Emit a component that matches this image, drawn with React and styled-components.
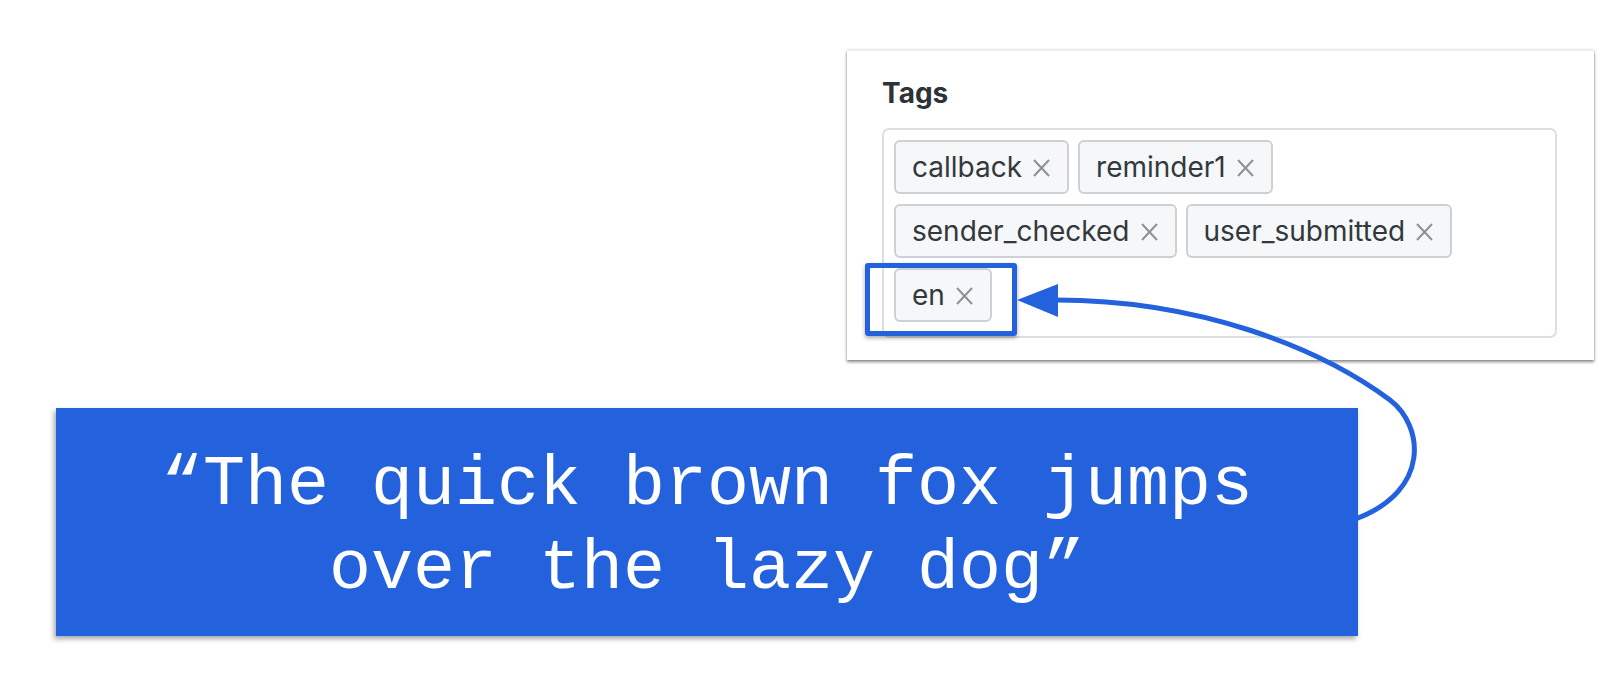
import React from 'react';
import styled, { createGlobalStyle } from 'styled-components';

const BLUE = '#2461dc';

const GlobalStyle = createGlobalStyle`
    html, body {
        margin: 0;
        padding: 0;
        background: #ffffff;
    }
    body {
        width: 1618px;
        height: 692px;
        overflow: hidden;
    }
`;

const Stage = styled.div`
    position: relative;
    width: 1618px;
    height: 692px;
    padding-top: 50px;
    box-sizing: border-box;
`;

const Card = styled.div`
    margin-left: 847px;
    width: 747px;
    height: 310px;
    box-sizing: border-box;
    padding: 26px 37px 0 35px;
    background: #ffffff;
    border-top: 1px solid #efefef;
    box-shadow: 0 2px 3px rgba(0, 0, 0, 0.45), 0 0 2px rgba(0, 0, 0, 0.18);
`;

const Label = styled.div`
    font-family: 'Inter', 'Liberation Sans', sans-serif;
    font-weight: 700;
    font-size: 28px;
    line-height: 32px;
    color: #2d3237;
`;

const TagBox = styled.div`
    margin-top: 19px;
    width: 675px;
    height: 210px;
    box-sizing: border-box;
    padding: 10px;
    border: 2px solid #dcdfe2;
    border-radius: 7px;
    display: flex;
    flex-wrap: wrap;
    align-content: flex-start;
    gap: 10px 9px;
`;

const Chip = styled.div`
    height: 54px;
    box-sizing: border-box;
    display: inline-flex;
    align-items: center;
    gap: 10px;
    padding: 0 16px;
    border: 2px solid #cdd1d5;
    border-radius: 6px;
    background: #f6f7f8;
    font-family: 'Inter', 'Liberation Sans', sans-serif;
    font-size: 28px;
    color: #33383d;
`;

const Remove = styled.svg`
    width: 19px;
    height: 18px;
    flex: none;
    margin-top: 1px;
`;

const Highlight = styled.div`
    position: absolute;
    left: 865px;
    top: 263px;
    width: 152px;
    height: 73px;
    box-sizing: border-box;
    border: 5px solid ${BLUE};
    border-radius: 3px;
    box-shadow: 0 2px 4px rgba(0, 0, 0, 0.35);
`;

const Banner = styled.div`
    margin: 48px 0 0 56px;
    width: 1302px;
    height: 228px;
    box-sizing: border-box;
    padding-top: 36px;
    background: ${BLUE};
    box-shadow: -2px 3px 5px rgba(0, 0, 0, 0.35);
    color: #ffffff;
    font-family: 'Liberation Mono', 'DejaVu Sans Mono', monospace;
    font-size: 70px;
    line-height: 84px;
    text-align: center;
`;

const Line = styled.div`
    white-space: pre;
`;

const Overlay = styled.svg`
    position: absolute;
    left: 0;
    top: 0;
    width: 1618px;
    height: 692px;
    pointer-events: none;
`;

const tags = ['callback', 'reminder1', 'sender_checked', 'user_submitted', 'en'];

const RemoveIcon = () => (
    <Remove viewBox="0 0 19 18">
        <path d="M2 1 L17 17 M17 1 L2 17" stroke="#8b9197" strokeWidth="2" fill="none" />
    </Remove>
);

// curved pointer from the banner back up to the highlighted tag
const Arrow = () => (
    <Overlay viewBox="0 0 1618 692">
        <path
            d="M1056 300 C1200 300 1320 348 1390 400 C1424 426 1430 490 1358 518"
            stroke={BLUE}
            strokeWidth="5"
            fill="none"
            strokeLinecap="round"
        />
        <polygon points="1017,300 1058,284 1058,317" fill={BLUE} />
    </Overlay>
);

export default function App() {
    return (
        <Stage>
            <GlobalStyle />
            <Card>
                <Label>Tags</Label>
                <TagBox>
                    {tags.map(tag => (
                        <Chip key={tag}>
                            {tag}
                            <RemoveIcon />
                        </Chip>
                    ))}
                </TagBox>
            </Card>
            <Banner>
                <Line>“The quick brown fox jumps</Line>
                <Line>over the lazy dog”</Line>
            </Banner>
            <Highlight />
            <Arrow />
        </Stage>
    );
}
